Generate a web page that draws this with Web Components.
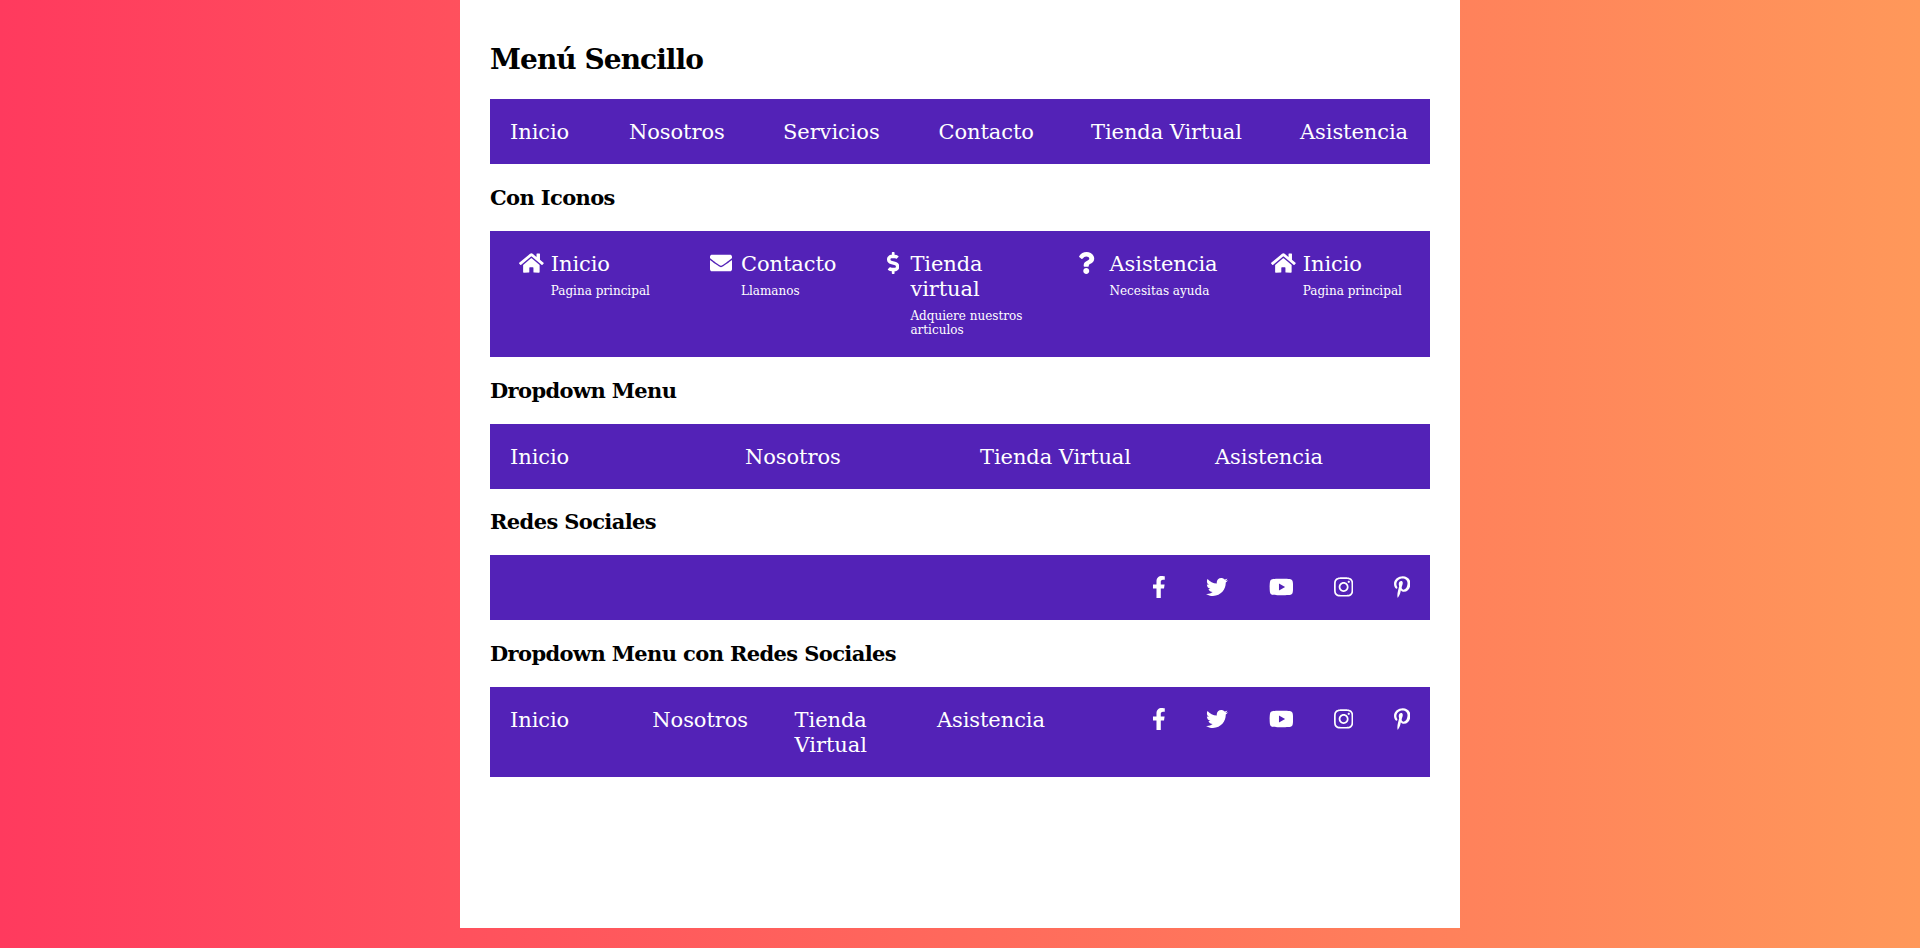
<!DOCTYPE html>
<html lang="es">
<head>
<meta charset="utf-8">
<title>Menú Sencillo</title>
<style>
  html, body { margin: 0; height: 948px; overflow: hidden; }
  body {
    background: linear-gradient(to right, #ff3a5e, #ff985a);
    font-family: "DejaVu Serif", serif;
  }
</style>
</head>
<body>
<menu-page>
  <menu-title level="1">Menú Sencillo</menu-title>
  <menu-bar columns="119px 154px 155.5px 152.5px 209px 150px">
    <menu-link>Inicio</menu-link>
    <menu-link>Nosotros</menu-link>
    <menu-link>Servicios</menu-link>
    <menu-link>Contacto</menu-link>
    <menu-link>Tienda Virtual</menu-link>
    <menu-link>Asistencia</menu-link>
  </menu-bar>

  <menu-title>Con Iconos</menu-title>
  <menu-bar columns="191px 177px 191px 193px 188px" inset="28px">
    <icon-link icon="home" hint="Pagina principal" space="7px">Inicio</icon-link>
    <icon-link icon="envelope" hint="Llamanos" space="9px">Contacto</icon-link>
    <icon-link icon="dollar" hint="Adquiere nuestros articulos" space="11px">Tienda virtual</icon-link>
    <icon-link icon="question" hint="Necesitas ayuda" space="15px">Asistencia</icon-link>
    <icon-link icon="home" hint="Pagina principal" space="7px">Inicio</icon-link>
  </menu-bar>

  <menu-title>Dropdown Menu</menu-title>
  <menu-bar columns="repeat(4, 235px)">
    <menu-link>Inicio</menu-link>
    <menu-link>Nosotros</menu-link>
    <menu-link>Tienda Virtual</menu-link>
    <menu-link>Asistencia</menu-link>
  </menu-bar>

  <menu-title short>Redes Sociales</menu-title>
  <menu-bar columns="1fr auto">
    <span></span>
    <social-links></social-links>
  </menu-bar>

  <menu-title>Dropdown Menu con Redes Sociales</menu-title>
  <menu-bar columns="repeat(4, 142.3px) 1fr auto">
    <menu-link>Inicio</menu-link>
    <menu-link>Nosotros</menu-link>
    <menu-link>Tienda Virtual</menu-link>
    <menu-link>Asistencia</menu-link>
    <span></span>
    <social-links></social-links>
  </menu-bar>
</menu-page>

<script>
const ICONS = {
  home: ['0 0 576 512', 'M280.37 148.26L96 300.11V464a16 16 0 0 0 16 16l112.06-.29a16 16 0 0 0 15.92-16V368a16 16 0 0 1 16-16h64a16 16 0 0 1 16 16v95.64a16 16 0 0 0 16 16.05L464 480a16 16 0 0 0 16-16V300L295.67 148.26a12.19 12.19 0 0 0-15.3 0zM571.6 251.47L488 182.56V44.05a12 12 0 0 0-12-12h-56a12 12 0 0 0-12 12v72.61L318.47 43a48 48 0 0 0-61 0L4.34 251.47a12 12 0 0 0-1.6 16.9l25.5 31A12 12 0 0 0 45.15 301l235.22-193.74a12.19 12.19 0 0 1 15.3 0L530.9 301a12 12 0 0 0 16.9-1.6l25.5-31a12 12 0 0 0-1.7-16.93z'],
  envelope: ['0 0 512 512', 'M502.3 190.8c3.9-3.1 9.7-.2 9.7 4.7V400c0 26.5-21.5 48-48 48H48c-26.5 0-48-21.5-48-48V195.6c0-5 5.7-7.8 9.7-4.7 22.4 17.4 52.1 39.5 154.1 113.6 21.1 15.4 56.7 47.8 92.2 47.6 35.7.3 72-32.8 92.3-47.6 102-74.1 131.6-96.3 154-113.7zM256 320c23.2.4 56.6-29.2 73.4-41.4 132.7-96.3 142.8-104.7 173.4-128.7 5.8-4.5 9.2-11.5 9.2-18.9v-19c0-26.5-21.5-48-48-48H48C21.5 64 0 85.5 0 112v19c0 7.4 3.4 14.3 9.2 18.9 30.6 23.9 40.7 32.4 173.4 128.7 16.8 12.2 50.2 41.8 73.4 41.4z'],
  dollar: ['0 0 288 512', 'M209.2 233.4l-108-31.6C88.7 198.2 80 186.5 80 173.5c0-16.3 13.2-29.5 29.5-29.5h66.3c12.2 0 24.2 3.7 34.2 10.5 6.1 4.1 14.3 3.1 19.5-2l34.8-34c7.1-6.9 6.1-18.4-1.8-24.5C238 74.8 207.4 64.1 176 64V16c0-8.8-7.2-16-16-16h-32c-8.8 0-16 7.2-16 16v48h-2.5C45.8 64-5.4 118.7.5 183.6c4.2 46.1 39.4 83.6 83.8 96.6l102.5 30c12.5 3.7 21.2 15.3 21.2 28.3 0 16.3-13.2 29.5-29.5 29.5h-66.3C100 368 88 364.3 78 357.5c-6.1-4.1-14.3-3.1-19.5 2l-34.8 34c-7.1 6.9-6.1 18.4 1.8 24.5 24.5 19.2 55.1 29.9 86.5 30v48c0 8.8 7.2 16 16 16h32c8.8 0 16-7.2 16-16v-48.2c46.6-.9 90.3-28.6 105.7-72.7 21.5-61.6-14.6-124.8-72.5-141.7z'],
  question: ['0 0 384 512', 'M202.021 0C122.202 0 70.503 32.703 29.914 91.026c-7.363 10.58-5.093 25.086 5.178 32.874l43.138 32.709c10.373 7.865 25.132 6.026 33.253-4.148 25.049-31.381 43.63-49.449 82.757-49.449 30.764 0 68.816 19.799 68.816 49.631 0 22.552-18.617 34.134-48.993 51.164-35.423 19.86-82.299 44.576-82.299 106.405V320c0 13.255 10.745 24 24 24h72.471c13.255 0 24-10.745 24-24v-5.773c0-42.86 125.268-44.645 125.268-160.627C377.504 66.256 286.902 0 202.021 0zM192 373.459c-38.196 0-69.271 31.075-69.271 69.271 0 38.195 31.075 69.27 69.271 69.27s69.271-31.075 69.271-69.271-31.075-69.27-69.271-69.27z'],
  facebook: ['0 0 320 512', 'M279.14 288l14.22-92.66h-88.91v-60.13c0-25.35 12.42-50.06 52.24-50.06h40.42V6.26S260.43 0 225.36 0c-73.22 0-121.08 44.38-121.08 124.72v70.62H22.89V288h81.39v224h100.17V288z'],
  twitter: ['0 0 512 512', 'M459.37 151.716c.325 4.548.325 9.097.325 13.645 0 138.72-105.583 298.558-298.558 298.558-59.452 0-114.68-17.219-161.137-47.106 8.447.974 16.568 1.299 25.34 1.299 49.055 0 94.213-16.568 130.274-44.832-46.132-.975-84.792-31.188-98.112-72.772 6.498.974 12.995 1.624 19.818 1.624 9.421 0 18.843-1.3 27.614-3.573-48.081-9.747-84.143-51.98-84.143-102.985v-1.299c13.969 7.797 30.214 12.67 47.431 13.319-28.264-18.843-46.781-51.005-46.781-87.391 0-19.492 5.197-37.36 14.294-52.954 51.655 63.675 129.3 105.258 216.365 109.807-1.624-7.797-2.599-15.918-2.599-24.04 0-57.828 46.782-104.934 104.934-104.934 30.213 0 57.502 12.67 76.67 33.137 23.715-4.548 46.456-13.32 66.599-25.34-7.798 24.366-24.366 44.833-46.132 57.827 21.117-2.273 41.584-8.122 60.426-16.243-14.292 20.791-32.161 39.308-52.628 54.253z'],
  youtube: ['0 0 576 512', 'M549.655 124.083c-6.281-23.65-24.787-42.276-48.284-48.597C458.781 64 288 64 288 64S117.22 64 74.629 75.486c-23.497 6.322-42.003 24.947-48.284 48.597-11.412 42.867-11.412 132.305-11.412 132.305s0 89.438 11.412 132.305c6.281 23.65 24.787 41.5 48.284 47.821C117.22 448 288 448 288 448s170.78 0 213.371-11.486c23.497-6.321 42.003-24.171 48.284-47.821 11.412-42.867 11.412-132.305 11.412-132.305s0-89.438-11.412-132.305zm-317.51 213.508V175.185l142.739 81.205-142.739 81.201z'],
  instagram: ['0 0 448 512', 'M224.1 141c-63.6 0-114.9 51.3-114.9 114.9s51.3 114.9 114.9 114.9S339 319.5 339 255.9 287.7 141 224.1 141zm0 189.6c-41.1 0-74.7-33.5-74.7-74.7s33.5-74.7 74.7-74.7 74.7 33.5 74.7 74.7-33.6 74.7-74.7 74.7zm146.4-194.3c0 14.9-12 26.8-26.8 26.8-14.9 0-26.8-12-26.8-26.8s12-26.8 26.8-26.8 26.8 12 26.8 26.8zm76.1 27.2c-1.7-35.9-9.9-67.7-36.2-93.9-26.2-26.2-58-34.4-93.9-36.2-37-2.1-147.9-2.1-184.9 0-35.8 1.7-67.6 9.9-93.9 36.1s-34.4 58-36.2 93.9c-2.1 37-2.1 147.9 0 184.9 1.7 35.9 9.9 67.7 36.2 93.9s58 34.4 93.9 36.2c37 2.1 147.9 2.1 184.9 0 35.9-1.7 67.7-9.9 93.9-36.2 26.2-26.2 34.4-58 36.2-93.9 2.1-37 2.1-147.8 0-184.8zM398.8 388c-7.8 19.6-22.9 34.7-42.6 42.6-29.5 11.7-99.5 9-132.1 9s-102.7 2.6-132.1-9c-19.6-7.8-34.7-22.9-42.6-42.6-11.7-29.5-9-99.5-9-132.1s-2.6-102.7 9-132.1c7.8-19.6 22.9-34.7 42.6-42.6 29.5-11.7 99.5-9 132.1-9s102.7-2.6 132.1 9c19.6 7.8 34.7 22.9 42.6 42.6 11.7 29.5 9 99.5 9 132.1s2.7 102.7-9 132.1z'],
  pinterest: ['0 0 384 512', 'M204 6.5C101.4 6.5 0 74.9 0 185.6 0 256 39.6 296 63.6 296c9.9 0 15.6-27.6 15.6-35.4 0-9.3-23.7-29.1-23.7-67.8 0-80.4 61.2-137.4 140.4-137.4 68.1 0 118.5 38.7 118.5 109.8 0 53.1-21.3 152.7-90.3 152.7-24.9 0-46.2-18-46.2-43.8 0-37.8 26.4-74.4 26.4-113.4 0-66.2-93.9-54.2-93.9 25.8 0 16.8 2.1 35.4 9.6 50.7-13.8 59.4-42 147.9-42 209.1 0 18.9 2.7 37.5 4.5 56.4 3.4 3.8 1.7 3.4 6.9 1.5 50.4-69 48.6-82.5 71.4-172.8 12.3 23.4 44.1 36 69.3 36 106.2 0 153.9-103.5 153.9-196.8C384 71.3 298.2 6.5 204 6.5z']
};

function iconSvg(name) {
  const [box, d] = ICONS[name];
  const w = box.split(' ')[2] / 512 * 22;
  return `<svg width="${w}" height="22" viewBox="${box}" fill="currentColor" aria-hidden="true"><path d="${d}"/></svg>`;
}

class MenuPage extends HTMLElement {
  constructor() {
    super();
    this.attachShadow({ mode: 'open' });
    this.shadowRoot.innerHTML = `
      <style>
        :host {
          display: block;
          box-sizing: border-box;
          width: 1000px;
          height: 928px;
          margin: 0 auto;
          padding: 41px 30px 0;
          background: #fff;
          color: #000;
        }
      </style>
      <slot></slot>
    `;
  }
}

class MenuTitle extends HTMLElement {
  constructor() {
    super();
    this.attachShadow({ mode: 'open' });
    this.shadowRoot.innerHTML = `
      <style>
        :host {
          display: block;
          height: 29px;
          margin: 19px 0;
          font: 700 21px/29px "DejaVu Serif", serif;
          letter-spacing: -0.62px;
          white-space: nowrap;
        }
        :host([level="1"]) {
          height: 38px;
          margin: 0 0 20px;
          font-size: 28px;
          line-height: 38px;
          letter-spacing: -0.95px;
        }
        :host([short]) { margin-top: 18px; }
      </style>
      <slot></slot>
    `;
  }
}

class MenuBar extends HTMLElement {
  constructor() {
    super();
    this.attachShadow({ mode: 'open' });
    this.shadowRoot.innerHTML = `
      <style>
        :host {
          display: grid;
          align-items: start;
          background: #5322b7;
          color: #fff;
          padding-left: var(--inset, 0);
        }
      </style>
      <slot></slot>
    `;
    this.style.gridTemplateColumns = this.getAttribute('columns');
    if (this.hasAttribute('inset')) this.style.setProperty('--inset', this.getAttribute('inset'));
  }
}

class MenuLink extends HTMLElement {
  constructor() {
    super();
    this.attachShadow({ mode: 'open' });
    this.shadowRoot.innerHTML = `
      <style>
        :host {
          display: block;
          padding: 21px 20px 19px;
          font-size: 21px;
          line-height: 25px;
          letter-spacing: -0.08px;
          cursor: pointer;
        }
      </style>
      <slot></slot>
    `;
  }
}

class IconLink extends HTMLElement {
  constructor() {
    super();
    this.attachShadow({ mode: 'open' });
    this.shadowRoot.innerHTML = `
      <style>
        :host {
          display: flex;
          align-items: flex-start;
          box-sizing: border-box;
          min-width: 0;
          padding: 21px 50px 20px 1px;
          cursor: pointer;
        }
        svg { display: block; flex: none; }
        .text { min-width: 0; }
        .label { font-size: 21px; line-height: 25px; letter-spacing: -0.08px; }
        .hint { margin-top: 7px; font-size: 12px; line-height: 14px; }
      </style>
      ${iconSvg(this.getAttribute('icon'))}
      <div class="text" style="margin-left:${this.getAttribute('space')}">
        <div class="label"><slot></slot></div>
        <div class="hint">${this.getAttribute('hint')}</div>
      </div>
    `;
  }
}

class SocialLinks extends HTMLElement {
  constructor() {
    super();
    this.attachShadow({ mode: 'open' });
    const names = ['facebook', 'twitter', 'youtube', 'instagram', 'pinterest'];
    this.shadowRoot.innerHTML = `
      <style>
        :host {
          display: flex;
          gap: 40.4px;
          padding: 21px 20px 22px;
        }
        svg { display: block; }
      </style>
      ${names.map(iconSvg).join('')}
    `;
  }
}

customElements.define('menu-page', MenuPage);
customElements.define('menu-title', MenuTitle);
customElements.define('menu-bar', MenuBar);
customElements.define('menu-link', MenuLink);
customElements.define('icon-link', IconLink);
customElements.define('social-links', SocialLinks);
</script>
</body>
</html>
